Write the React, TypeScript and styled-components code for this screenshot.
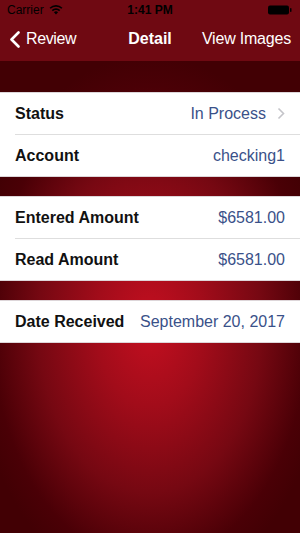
import React, { ReactElement } from "react";
import styled, { createGlobalStyle } from "styled-components";

interface Row {
  label: string;
  value: string;
  chevron?: boolean;
}

const sections: Row[][] = [
  [
    { label: "Status", value: "In Process", chevron: true },
    { label: "Account", value: "checking1" },
  ],
  [
    { label: "Entered Amount", value: "$6581.00" },
    { label: "Read Amount", value: "$6581.00" },
  ],
  [{ label: "Date Received", value: "September 20, 2017" }],
];

export default function App(): ReactElement {
  return (
    <>
      <GlobalStyle />
      <Screen>
        <Header>
          <StatusBar>
            <Carrier>
              Carrier
              <svg width="14" height="10" viewBox="0 0 14 10">
                <path d="M7 9.6 L4.9 7.3 A3 3 0 0 1 9.1 7.3 Z" fill="#000" />
                <path d="M3.3 5.6 A5.3 5.3 0 0 1 10.7 5.6" stroke="#000" strokeWidth="1.6" fill="none" />
                <path d="M1.1 3.3 A8.4 8.4 0 0 1 12.9 3.3" stroke="#000" strokeWidth="1.6" fill="none" />
              </svg>
            </Carrier>
            <Clock>1:41 PM</Clock>
            <Battery>
              <svg width="24" height="10" viewBox="0 0 24 10">
                <rect x="0" y="0.5" width="21" height="9" rx="2" fill="#000" />
                <rect x="22" y="3" width="1.5" height="4" rx="0.7" fill="#000" />
              </svg>
            </Battery>
          </StatusBar>
          <NavBar>
            <BackButton>
              <svg width="12" height="17" viewBox="0 0 12 17">
                <path d="M9.5 1.5 L2.5 8.5 L9.5 15.5" stroke="#fff" strokeWidth="2.6" fill="none" strokeLinecap="round" strokeLinejoin="round" />
              </svg>
              Review
            </BackButton>
            <NavTitle>Detail</NavTitle>
            <NavAction>View Images</NavAction>
          </NavBar>
        </Header>
        <Content>
          {sections.map((rows, i) => (
            <Section key={i}>
              {rows.map((row) => (
                <Cell key={row.label}>
                  <Label>{row.label}</Label>
                  <Value>{row.value}</Value>
                  {row.chevron && (
                    <Chevron width="8" height="13" viewBox="0 0 8 13">
                      <path d="M1.5 1.5 L6.5 6.5 L1.5 11.5" stroke="#c4c4c9" strokeWidth="1.6" fill="none" />
                    </Chevron>
                  )}
                </Cell>
              ))}
            </Section>
          ))}
        </Content>
      </Screen>
    </>
  );
}

const GlobalStyle = createGlobalStyle`
  html, body {
    margin: 0;
    padding: 0;
    background: #440004;
  }
`;

const Screen = styled.div`
  width: 300px;
  height: 533px;
  overflow: hidden;
  font-family: "Liberation Sans", Arial, sans-serif;
  background: radial-gradient(
    ellipse 180px 270px at 50% 325px,
    #c40f20 0%,
    #a20c1a 30%,
    #760812 62%,
    #4a0006 88%,
    #420004 100%
  );
`;

const Header = styled.div`
  background: #6f0912;
  height: 61px;
  display: flex;
  flex-direction: column;
`;

const StatusBar = styled.div`
  height: 20px;
  display: grid;
  grid-template-columns: 1fr auto 1fr;
  align-items: center;
  padding: 0 7px;
  font-size: 12px;
  color: #000;
`;

const Carrier = styled.div`
  display: flex;
  align-items: center;
  gap: 5px;
`;

const Clock = styled.div`
  font-weight: bold;
`;

const Battery = styled.div`
  display: flex;
  justify-content: flex-end;
  padding-right: 1px;
`;

const NavBar = styled.div`
  flex: 1;
  display: grid;
  grid-template-columns: 1fr auto 1fr;
  align-items: center;
  padding: 0 9px 0 9px;
  color: #fff;
  font-size: 16px;
  padding-bottom: 3px;
`;

const BackButton = styled.div`
  display: flex;
  align-items: center;
  gap: 5px;
  letter-spacing: -0.4px;
`;

const NavTitle = styled.div`
  font-weight: bold;
`;

const NavAction = styled.div`
  text-align: right;
  letter-spacing: -0.2px;
`;

const Content = styled.div`
  display: flex;
  flex-direction: column;
  gap: 21px;
  padding-top: 32px;
`;

const Section = styled.div`
  background: #fff;
  border-top: 1px solid rgba(210, 200, 204, 0.75);
  border-bottom: 1px solid rgba(210, 200, 204, 0.75);
  margin: -1px 0;
`;

const Cell = styled.div`
  height: 41px;
  margin-left: 15px;
  padding-right: 15px;
  display: flex;
  align-items: center;
  font-size: 16px;

  & + & {
    border-top: 1px solid #dedede;
  }
`;

const Label = styled.span`
  font-weight: bold;
  color: #111;
  flex: 1;
`;

const Value = styled.span`
  color: #3a5189;
`;

const Chevron = styled.svg`
  margin-left: 11px;
  margin-right: 0;
`;
